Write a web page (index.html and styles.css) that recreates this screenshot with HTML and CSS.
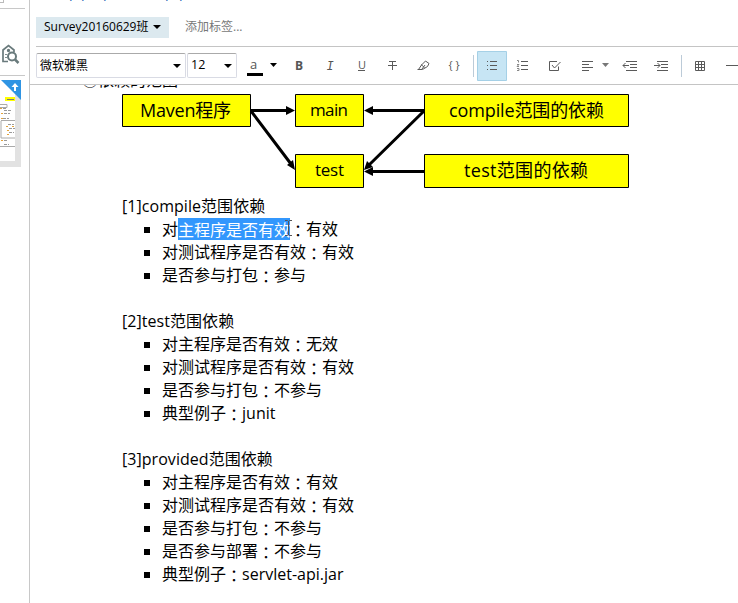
FILE: index.html
```html
<!DOCTYPE html>
<html lang="zh-CN">
<head>
<meta charset="utf-8">
<title>Maven 笔记</title>
<link rel="stylesheet" href="styles.css">
</head>
<body>
<div class="app">
  <aside class="rail">
    <div class="rail-top"><i class="box"></i></div>
    <div class="rail-tag">
      <svg width="20" height="22" viewBox="0 0 20 22" fill="none" stroke="#697a7c" stroke-width="1.7"><path d="M8 17.500H3V6L8.500 1.500 14 6V8"/><circle cx="8.500" cy="6.500" r=".8"/><path d="M6 10v1M6 13v1"/><circle cx="12" cy="12.500" r="4" stroke-width="2"/><path d="M15 15.500L18.500 19" stroke-width="2.500"/></svg>
    </div>
    <div class="thumb">
      <svg width="21" height="87" viewBox="0 0 21 87"><path fill="#e2e2e2" d="M0 0h21v87H0z"/><path fill="#fff" d="M0 0h15v81H0z"/><path fill="#ff0" d="M5 17h10v4H5z"/><path stroke="#777" d="M7 19.500h7"/><path stroke="#aaa" fill="none" d="M0 24.500h7v3H0M1 40.500h14M1 41v17h14M0 66.500h15"/><path stroke="#999" stroke-dasharray="3 1" d="M3 28.500h4M4 30.500h7M4 33.500h6M3 38.500h6M8 44.500h6M9 48.500h6M9 52.500h5M4 60.500h3M4 64.500h5"/><path stroke="#e4a43b" stroke-dasharray="2 4" d="M0 28.500h3M1 33.500h2M1 38.500h2M6 46.500h9M7 50.500h4M7 54.500h4M1 60.500h5"/><path fill="#2f94e3" d="M1 0h20v20z"/><path fill="#fff" d="M15 3l3.500 4H16v4h-2V7h-2.500z"/></svg>
    </div>
  </aside>
  <main class="main">
    <div class="title"><span>_</span><span>p</span><span>p</span><span>p</span><span>p</span><span>p</span></div>
    <div class="tags"><span class="tag">Survey20160629班<i class="caret"></i></span><span class="add">添加标签...</span></div>
    <div class="toolbar">
      <div class="select font">微软雅黑<i class="caret"></i></div>
      <div class="select size">12<i class="caret"></i></div>
      <svg class="icons" width="491" height="37" viewBox="247 47 491 37" fill="none" stroke="#5a5a5a">
        <g stroke="none" fill="#555">
          <text x="250" y="69" class="g-a">a</text><text x="295" y="70" class="g-b">B</text><text x="326.500" y="70" class="g-i">I</text><text x="358" y="69" class="g-u">U</text><text x="448.500" y="69" class="g-c">{ }</text>
        </g>
        <path stroke="#000" stroke-width="3" d="M247 74.500h16"/><path fill="#000" stroke="none" d="M270 63h7l-3.500 4z"/>
        <path d="M358 70.500h7M388 65.500h9M389 61.500h7M392.500 61v9"/>
        <path d="M417.500 69.500h5l5-3 1.500-3-3.500-2.500-4 4-3 4.500M421 64.500l3.500 3M422 69l3-4"/>
        <path stroke="#bccbd8" d="M473.500 55v22M681.500 55v22"/>
        <path fill="#c7e5f4" stroke="#a5d0e6" d="M477.500 51.500h29v29h-29z"/>
        <path d="M490 61.500h7M490 65.500h7M490 69.500h7M521 61.500h7M521 65.500h7M521 69.500h7"/>
        <path d="M487 61.500h1M487 65.500h1M487 69.500h1"/>
        <path stroke="#888" d="M517 60.500h1.500v2M517 64.500h2l-2 2h2M517 68.500h2v2h-2"/>
        <path d="M557 61.500h-7.500v9h9v-4M552 65l2.500 3 6-6"/>
        <path d="M582 61.500h11M582 64.500h7M582 67.500h11M582 70.500h7"/><path fill="#777" stroke="none" d="M602 63h7l-3.500 4z"/>
        <path d="M626 61.500h11M630 64.500h7M630 67.500h7M626 70.500h11M623 65.500h6M625.500 63l-2.500 2.500 2.500 2.500"/>
        <path d="M657 61.500h11M661 64.500h7M661 67.500h7M657 70.500h11M654 65.500h6M657.500 63l2.500 2.500-2.500 2.500"/>
        <path d="M695.500 61.500h9v9h-9zM698.500 61v10M701.500 61v10M695 64.500h10M695 67.500h10M726 65.500h12"/>
      </svg>
    </div>
    <div class="doc">
      <div class="cut"><span>②依赖的范围</span></div>
      <svg class="diagram" width="508" height="96" viewBox="122 93 508 96">
        <g fill="#ff0" stroke="#000"><path d="M122.500 94.500h128v32h-128zM295.500 94.500h68v32h-68zM424.500 94.500h204v32h-204zM295.500 154.500h68v33h-68zM424.500 154.500h204v33h-204z"/></g>
        <g stroke="#000" stroke-width="3"><path d="M251 110.500h37M372 110.500h52M251 111l40 53M424 111l-55 54M372 171.500h52"/></g>
        <path d="M295 110.500l-9-4.500v9zM364 110.500l9-4.500v9zM295 170l-8-5 6-5zM364 170l3-9 6 6zM364 171.500l9-4.500v9z"/>
        <g class="labels"><text x="140" y="117" textLength="91">Maven程序</text><text x="310" y="116" textLength="38" class="latin">main</text><text x="449" y="117" textLength="155">compile范围的依赖</text><text x="315" y="176" textLength="29" class="latin">test</text><text x="464" y="177" textLength="124">test范围的依赖</text></g>
      </svg>
      <section><h3>[1]compile范围依赖</h3><ul><li>对<mark>主程序是否有效</mark><b>：</b>有效<svg class="cursor" width="7" height="17" viewBox="0 0 7 17" fill="none" stroke="#555"><path d="M0 .5h2.500l1 1 1-1H7M3.500 1v14M0 15.500h2.500l1-1 1 1H7"/></svg></li><li>对测试程序是否有效<b>：</b>有效</li><li>是否参与打包<b>：</b>参与</li></ul></section>
      <section><h3>[2]test范围依赖</h3><ul><li>对主程序是否有效<b>：</b>无效</li><li>对测试程序是否有效<b>：</b>有效</li><li>是否参与打包<b>：</b>不参与</li><li>典型例子<b>：</b>junit</li></ul></section>
      <section><h3>[3]provided范围依赖</h3><ul><li>对主程序是否有效<b>：</b>有效</li><li>对测试程序是否有效<b>：</b>有效</li><li>是否参与打包<b>：</b>不参与</li><li>是否参与部署<b>：</b>不参与</li><li>典型例子<b>：</b>servlet-api.jar</li></ul></section>
    </div>
  </main>
</div>
</body>
</html>
```
FILE: styles.css
```css
* { box-sizing: border-box; }
body { margin: 0; background: #fff; color: #000; font-family: "Open Sans", "Noto Sans CJK SC", sans-serif; }
.app { display: flex; width: 738px; height: 603px; overflow: hidden; }
.rail { width: 30px; border-right: 1px solid #c8c8c8; flex: none; }
.rail-top { height: 9px; width: 25px; border-bottom: 1px solid #c8c8c8; }
.box { display: block; width: 4px; height: 3px; border: solid #bbb; border-width: 0 1px 1px 0; }
.rail-tag { height: 67px; width: 25px; border-bottom: 1px solid #c8c8c8; padding: 35px 0 0; }
.thumb { padding-top: 4px; }
.rail svg { display: block; }
.main { flex: 1; min-width: 0; }
.title { display: grid; grid-template-columns: 8px 12px 22px 62px 14px 14px; height: 17px; overflow: hidden; color: #1e64b4; font-size: 14px; line-height: 20px; padding-left: 31px; }
.title span { display: block; margin-top: -18px; }
.tags { display: flex; height: 30px; margin-left: 6px; border-bottom: 1px solid #c4c4c4; font-size: 12px; line-height: 20px; }
.tag { display: flex; align-items: center; width: 133px; height: 21px; padding: 0 0 1px 8px; background: #dce9ef; white-space: nowrap; }
.caret { border: 4px solid transparent; border-top-color: #000; border-bottom: 0; margin-left: 5px; }
.select .caret { margin: 2px 0 0; }
.add { margin-left: 16px; color: #777; }
.toolbar { display: flex; height: 38px; border-bottom: 1px solid #c4c4c4; padding-left: 6px; }
.select { display: flex; align-items: center; justify-content: space-between; height: 25px; margin-top: 6px; border: 1px solid #d9dbe4; border-top-color: #aaa; border-radius: 2px; padding: 0 4px 2px 3px; font-size: 12px; }
.font { width: 150px; }
.size { width: 50px; margin-left: 1px; font-size: 12.5px; }
.icons { flex: none; margin-left: 10px; display: block; }
.g-a { font: 13px "Open Sans"; }
.g-b { font: bold 12px "Open Sans"; }
.g-i { font: italic 12px "Liberation Mono"; }
.g-u { font: 11px "Open Sans"; }
.g-c { font: 11px "Open Sans"; }
.doc { padding-left: 92px; font-size: 16px; line-height: 23px; }
.cut { height: 8px; overflow: hidden; margin-left: -40px; }
.cut span { display: block; margin-top: -16px; }
.diagram { display: block; margin-bottom: 6px; }
.labels { font: 18px "Open Sans", "Noto Sans CJK SC", sans-serif; }
.labels .latin { font-size: 17px; }
section { margin-bottom: 23px; }
h3 { margin: 0; font-size: 16px; font-weight: 400; height: 23px; letter-spacing: .05px; }
ul { margin: 0; padding: 0; list-style: none; }
li { position: relative; display: flex; align-items: center; height: 23px; padding-left: 22px; white-space: pre; }
li::before { content: ""; width: 6px; height: 6px; background: #000; margin-right: 12px; }
mark { background: #3297fd; color: #fff; height: 22px; line-height: 24px; margin-bottom: 1px; }
b { font-weight: 400; font-family: "Noto Sans CJK TC"; padding-top: 2px; }
.cursor { position: absolute; left: 163px; top: 2px; }
```
